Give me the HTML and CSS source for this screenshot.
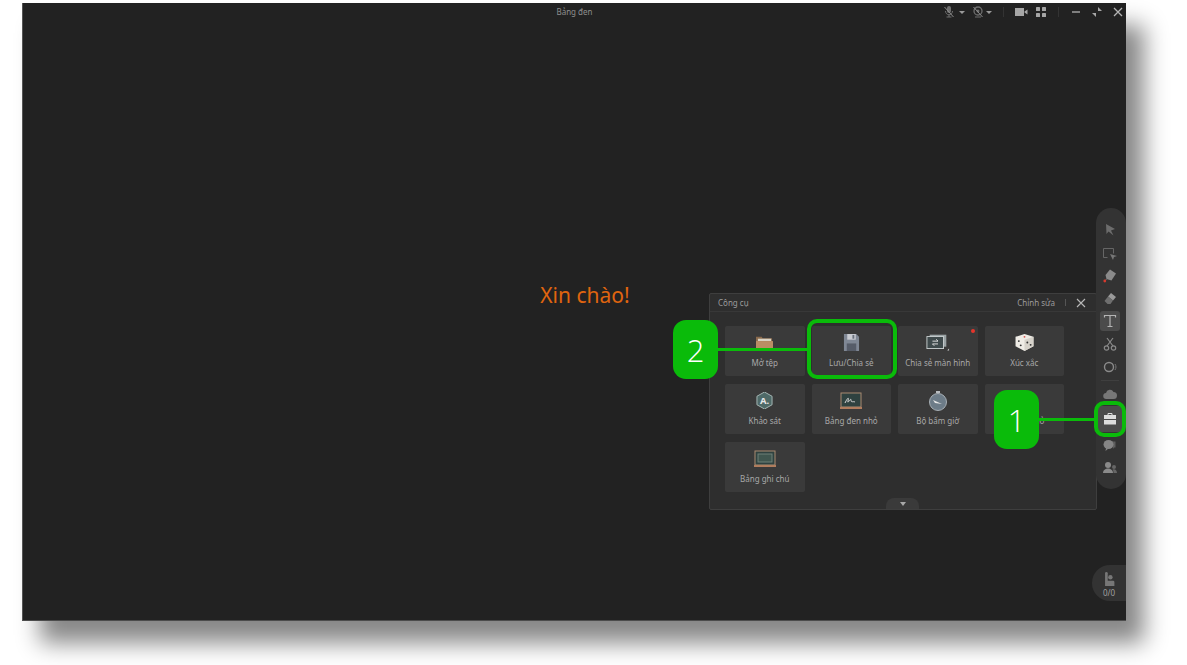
FILE: index.html
```html
<!DOCTYPE html>
<html lang="vi">
<head>
    <meta charset="UTF-8">
    <meta name="viewport" content="width=device-width, initial-scale=1.0">
    <title>Bảng đen</title>
    <link rel="stylesheet" href="styles.css">
</head>
<body>
    <div class="window">
        <header class="titlebar">
            <span></span>
            <span class="title">Bảng đen</span>
            <div class="controls">
                <svg class="ctl mic" viewBox="0 0 12 12"><rect x="4" y="0" width="4" height="7" rx="2" fill="#6f6f6f"/><path d="M2.500 5c0 5 7 5 7 0M6 9v2M3.500 11h5" stroke="#6f6f6f" fill="none"/><path d="M1.500 1l9 10" stroke="#8c8c8c"/></svg>
                <span class="caret"></span>
                <svg class="ctl cam" viewBox="0 0 12 12"><circle cx="6" cy="5" r="4" fill="none" stroke="#6f6f6f" stroke-width="1.300"/><circle cx="6" cy="5" r="1.500" fill="#6f6f6f"/><path d="M3 11h6" stroke="#6f6f6f"/><path d="M1.500 1l9 10" stroke="#8c8c8c"/></svg>
                <span class="caret caret-b"></span>
                <span class="sep"></span>
                <svg class="ctl video" viewBox="0 0 13 10"><rect x="0" y="1" width="9" height="8" fill="#a6a6a6"/><path d="M9.500 4.500l3-2v5l-3-2z" fill="#a6a6a6"/></svg>
                <svg class="ctl grid" viewBox="0 0 10 10"><rect width="4" height="4" rx=".6" fill="#a6a6a6"/><rect x="6" width="4" height="4" rx=".6" fill="#a6a6a6"/><rect y="6" width="4" height="4" rx=".6" fill="#a6a6a6"/><rect x="6" y="6" width="4" height="4" rx=".6" fill="#a6a6a6"/></svg>
                <span class="sep sep-b"></span>
                <svg class="ctl min" viewBox="0 0 10 10"><path d="M1 5h8" stroke="#a6a6a6" stroke-width="1.400"/></svg>
                <svg class="ctl restore" viewBox="0 0 10 10"><path d="M6 0v4h4zM0 6h4v4z" fill="#a6a6a6"/></svg>
                <svg class="ctl close" viewBox="0 0 10 10"><path d="M1 1l8 8M9 1l-8 8" stroke="#b4b4b4" stroke-width="1.300"/></svg>
            </div>
        </header>

        <main class="board">
            <p class="hello">Xin chào!</p>
        </main>

        <section class="panel">
            <div class="panel-head">
                <span>Công cụ</span>
                <div class="panel-actions">
                    <span>Chỉnh sửa</span>
                    <span class="head-sep"></span>
                    <svg class="panel-close" viewBox="0 0 10 10"><path d="M1 1l8 8M9 1l-8 8" stroke="#b8b8b8" stroke-width="1.100"/></svg>
                </div>
            </div>
            <div class="tools">
                <div class="tool">
                    <svg class="tool-icon" viewBox="0 0 20 18"><path d="M1 3h6l1 1.500h10V9H1z" fill="#8a6a4c"/><rect x="3" y="5" width="14" height="2.500" fill="#d8d2c4"/><path d="M1 7.500h18V16H1z" fill="#b98d64"/></svg>
                    <span>Mở tệp</span>
                </div>
                <div class="tool">
                    <svg class="tool-icon" viewBox="0 0 20 18"><path d="M2 0h13l3 3v15H2z" fill="#7f8794"/><rect x="5.500" y="0" width="9" height="6" fill="#c9ccd2"/><rect x="11" y="1" width="2" height="4" fill="#6a717d"/><rect x="5" y="10" width="10" height="8" fill="#565c68"/></svg>
                    <span>Lưu/Chia sẻ</span>
                </div>
                <div class="tool">
                    <i class="dot"></i>
                    <svg class="tool-icon wide" viewBox="0 0 26 18"><rect x="4" y="0" width="18" height="13" fill="#9aa3a5"/><rect x="1" y="2" width="18" height="13" fill="#3f4a4c" stroke="#c9cfd0"/><path d="M7 7h6l-2-2M13 10H7l2 2" stroke="#e4e4e4" fill="none"/><path d="M25 15v2h-2z" fill="#cfcfcf"/></svg>
                    <span>Chia sẻ màn hình</span>
                </div>
                <div class="tool">
                    <svg class="tool-icon" viewBox="0 0 20 18"><path d="M10 0l9.500 3v10L10 18 .5 13V3z" fill="#efece6"/><path d="M10 6l9.500-3v10L10 18z" fill="#d6d2ca"/><circle cx="10" cy="3" r="1" fill="#d9534f"/><circle cx="4" cy="7.500" r="1" fill="#333"/><circle cx="6" cy="12" r="1" fill="#333"/><circle cx="13" cy="9" r="1" fill="#333"/><circle cx="16.500" cy="11.500" r="1" fill="#333"/></svg>
                    <span>Xúc xắc</span>
                </div>
                <div class="tool">
                    <svg class="tool-icon" viewBox="0 0 20 18"><path d="M10 0l8 4.500v9L10 18l-8-4.500v-9z" fill="#4f6a68" stroke="#a9bab8"/><text x="10" y="13" class="glyph">A.</text></svg>
                    <span>Khảo sát</span>
                </div>
                <div class="tool">
                    <svg class="tool-icon wide" viewBox="0 0 24 18"><rect x="2" y="1" width="20" height="14" fill="#2f4240" stroke="#a98a70"/><path d="M6 11c3-6 4-6 3-2s3-4 3-1 2 1 4 2" stroke="#d8d8d8" fill="none"/><rect x="1" y="15" width="22" height="2" fill="#b07d5e"/></svg>
                    <span>Bảng đen nhỏ</span>
                </div>
                <div class="tool">
                    <svg class="tool-icon wide" viewBox="0 0 20 20"><rect x="8" y="0" width="4" height="2" fill="#b8bcc0"/><circle cx="10" cy="11" r="8.500" fill="#6d7c88" stroke="#a7afb5"/><path d="M5 9l9 4-7-1z" fill="#e6e6e6"/></svg>
                    <span>Bộ bấm giờ</span>
                </div>
                <div class="tool">
                    <span>Nhóm nhỏ</span>
                </div>
                <div class="tool">
                    <svg class="tool-icon wide" viewBox="0 0 24 18"><rect x="2" y="1" width="20" height="14" fill="#2f4240" stroke="#a98a70"/><rect x="5" y="4" width="14" height="8" fill="#40564f" stroke="#6f8078"/><rect x="1" y="15" width="22" height="2" fill="#b07d5e"/></svg>
                    <span>Bảng ghi chú</span>
                </div>
            </div>
            <div class="panel-tab"><i></i></div>
        </section>

        <aside class="toolbar">
            <svg class="tb" viewBox="0 0 14 14"><path d="M3 1l9 5-4 1.500 2.500 5-5-4-2 2.500z" fill="#6c6c6c"/></svg>
            <svg class="tb tb-select" viewBox="0 0 14 14"><path d="M.5 1.500h10v5M.5 1.500v9h4" fill="none" stroke="#666"/><path d="M7 7l7 2-3 1-1 3z" fill="#777"/></svg>
            <svg class="tb" viewBox="0 0 14 14"><path d="M7 .5l6 4-4.500 7-5-1.500L2.500 6z" fill="#8a8a8a"/><path d="M3.500 10l-1.500 2" stroke="#777"/><circle cx="1.800" cy="12" r="1.400" fill="#d63a2e"/></svg>
            <svg class="tb" viewBox="0 0 14 14"><path d="M8 1l5 4-3 3.500-5-4z" fill="#9a9a9a"/><path d="M5 4.500l5 4-2.500 3.500H4.500L1.500 9z" fill="#6e6e6e"/></svg>
            <div class="tb-active text-tool"><svg class="tb" viewBox="0 0 14 14"><path d="M1.500 3.500V1.500h11v2M7 1.500v11M4.500 12.500h5" fill="none" stroke="#b4b4b4" stroke-width="1.200"/></svg></div>
            <svg class="tb" viewBox="0 0 14 14"><path d="M4 1l6 8M10 1L4 9" stroke="#8a8a8a" stroke-width="1.200"/><circle cx="3.500" cy="11" r="2.200" fill="none" stroke="#8a8a8a" stroke-width="1.200"/><circle cx="10.500" cy="11" r="2.200" fill="none" stroke="#8a8a8a" stroke-width="1.200"/></svg>
            <svg class="tb" viewBox="0 0 14 14"><circle cx="6" cy="7" r="4.500" fill="none" stroke="#8a8a8a" stroke-width="1.400"/><path d="M12 4c1.300 2 1.300 4 0 6" fill="none" stroke="#777"/></svg>
            <span class="tb-line"></span>
            <svg class="tb" viewBox="0 0 14 14"><path d="M3.500 12a3 3 0 0 1-.5-6 4 4 0 0 1 7.500-1 3.500 3.500 0 0 1 0 7z" fill="#777"/></svg>
            <div class="tb-active box-tool"><svg class="tb" viewBox="0 0 14 14"><path d="M5 3V1.500h4V3" fill="none" stroke="#ddd"/><rect x="1" y="3" width="12" height="4" fill="#ddd"/><rect x="1" y="8" width="12" height="4.500" fill="#ddd"/></svg></div>
            <svg class="tb" viewBox="0 0 14 14"><path d="M9 3.500h3.500v6H11l-1 1.500z" fill="#5e5e5e"/><ellipse cx="5.500" cy="6.500" rx="5" ry="4.500" fill="#858585"/><path d="M3 10l-.5 3 3-2.500z" fill="#858585"/></svg>
            <svg class="tb" viewBox="0 0 14 14"><circle cx="5" cy="4" r="3" fill="#8a8a8a"/><path d="M0 12c0-6 10-6 10 0z" fill="#8a8a8a"/><circle cx="11" cy="6" r="2" fill="#666"/><path d="M10.500 12c0-2-.5-3-1-3.500 2-1 4.500 0 4.500 3.500z" fill="#666"/></svg>
        </aside>

        <div class="seat">
            <svg class="seat-icon" viewBox="0 0 12 18"><rect x="1" y="1" width="3" height="11" rx="1.500" fill="#777"/><circle cx="7" cy="7" r="2.500" fill="#777"/><path d="M1 11h9a1.500 1.500 0 0 1 1.500 1.500V17H1z" fill="#777"/></svg>
            <span>0/0</span>
        </div>

        <div class="mark mark-save"></div>
        <div class="mark mark-box"></div>
        <div class="link link-save"></div>
        <div class="link link-box"></div>
        <div class="badge badge-save">2</div>
        <div class="badge badge-box">1</div>
    </div>
</body>
</html>
```

FILE: styles.css
```css
body {
    margin: 0;
    background-color: #fff;
    font-family: "Noto Sans", "Open Sans", sans-serif;
    height: 665px;
    overflow: hidden;
}

.window {
    position: relative;
    display: flex;
    flex-direction: column;
    box-sizing: border-box;
    width: 1104px;
    height: 618px;
    margin: 3px 0 0 22px;
    background-color: #222;
    border-bottom: 1px solid #4c4c4c;
    border-left: 1px solid #555;
    box-shadow: 18px 22px 22px rgba(0, 0, 0, 0.47);
}

.titlebar {
    display: grid;
    grid-template-columns: 1fr auto 1fr;
    align-items: center;
    height: 18px;
    color: #8e8e8e;
    font-size: 8px;
}

.title {
    line-height: 18px;
}

.controls {
    display: flex;
    align-items: center;
    justify-content: flex-end;
    padding-right: 3px;
}

.ctl {
    display: block;
    width: 10px;
    height: 10px;
}

.mic {
    width: 12px;
    height: 12px;
}

.cam {
    width: 12px;
    height: 12px;
    margin-left: 7px;
}

.caret {
    width: 0;
    height: 0;
    margin-left: 4px;
    border-top: 3px solid #9a9a9a;
    border-left: 3px solid transparent;
    border-right: 3px solid transparent;
}

.caret-b {
    margin-left: 2px;
}

.sep {
    width: 1px;
    height: 10px;
    margin: 0 11px;
    background-color: #333;
}

.video {
    width: 13px;
}

.grid {
    margin-left: 8px;
}

.sep-b {
    margin: 0 12px;
}

.restore {
    margin-left: 11px;
}

.close {
    margin-left: 11px;
}

.board {
    flex: 1;
    display: flex;
    align-items: center;
    justify-content: center;
}

.hello {
    margin: 0 0 52px 21px;
    color: #e0650f;
    font-size: 21px;
    line-height: 28px;
}

.panel {
    position: absolute;
    left: 686px;
    top: 290px;
    box-sizing: border-box;
    width: 388px;
    height: 217px;
    background-color: #2e2e2e;
    border: 1px solid #3e3e3e;
    border-radius: 2px;
    color: #a8a8a8;
    font-size: 8px;
}

.panel-head {
    display: flex;
    align-items: center;
    justify-content: space-between;
    height: 17px;
    padding: 0 10px 0 8px;
    border-bottom: 1px solid #383838;
    color: #9c9c9c;
}

.panel-actions {
    display: flex;
    align-items: center;
}

.head-sep {
    width: 1px;
    height: 7px;
    margin: 0 10px;
    background-color: #555;
}

.panel-close {
    width: 10px;
    height: 10px;
}

.tools {
    display: grid;
    grid-template-columns: repeat(4, 79.500px);
    grid-auto-rows: 50px;
    gap: 8px 7px;
    padding: 14px 0 0 15px;
}

.tool {
    position: relative;
    display: flex;
    flex-direction: column;
    align-items: center;
    justify-content: flex-end;
    padding-bottom: 8px;
    box-sizing: border-box;
    background-color: #3a3a3a;
    border-radius: 2px;
    white-space: nowrap;
}

.tool-icon {
    width: 19px;
    height: 17px;
    margin-bottom: 6px;
}

.tool-icon.wide {
    width: 24px;
    height: 20px;
    margin-bottom: 4px;
}

.glyph {
    fill: #e8e8e8;
    font-size: 10px;
    font-weight: 700;
    text-anchor: middle;
    font-family: "Noto Sans", sans-serif;
}

.dot {
    position: absolute;
    top: 3px;
    right: 3px;
    width: 4px;
    height: 4px;
    border-radius: 50%;
    background-color: #e5352b;
}

.panel-tab {
    position: absolute;
    left: 176px;
    bottom: 0;
    display: flex;
    justify-content: center;
    align-items: center;
    width: 33px;
    height: 11px;
    background-color: #3a3a3a;
    border-radius: 8px 8px 0 0;
}

.panel-tab i {
    width: 0;
    height: 0;
    border-top: 4px solid #a8a8a8;
    border-left: 3px solid transparent;
    border-right: 3px solid transparent;
}

.toolbar {
    position: absolute;
    top: 205px;
    right: 0;
    display: flex;
    flex-direction: column;
    align-items: center;
    box-sizing: border-box;
    width: 30px;
    height: 281px;
    padding: 15px 2px 0 0;
    background-color: #333;
    border-radius: 15px;
}

.tb {
    display: block;
    flex: none;
    width: 14px;
    height: 14px;
    margin-bottom: 9px;
}

.tb-select {
    margin: 1px 0 8px;
}

.tb-active {
    flex: none;
    display: flex;
    align-items: center;
    justify-content: center;
    width: 20px;
    height: 20px;
    margin: -4px 0 6px;
    background-color: #4b4b4b;
    border-radius: 3px;
}

.tb-active .tb {
    margin: 0;
}

.box-tool {
    width: 24px;
    height: 26px;
    margin: -4px 0 6px;
}

.tb-line {
    flex: none;
    width: 18px;
    height: 1px;
    margin: -3px 0 6px;
    background-color: #3f3f3f;
}

.seat {
    position: absolute;
    left: 1069px;
    top: 562px;
    display: flex;
    flex-direction: column;
    align-items: center;
    box-sizing: border-box;
    width: 34px;
    height: 36px;
    padding-top: 6px;
    background-color: #333;
    border-radius: 18px 0 0 18px;
    color: #a0a0a0;
    font-size: 8px;
    line-height: 9px;
}

.seat-icon {
    width: 11px;
    height: 16px;
    margin-bottom: 1px;
}

.mark {
    position: absolute;
    box-sizing: border-box;
    border: 4px solid #0abb0a;
    border-radius: 10px;
}

.mark-save {
    left: 784px;
    top: 316px;
    width: 90px;
    height: 60px;
}

.mark-box {
    left: 1071px;
    top: 398px;
    width: 32px;
    height: 36px;
}

.link {
    position: absolute;
    height: 3px;
    background-color: #0abb0a;
}

.link-save {
    left: 693px;
    top: 345px;
    width: 93px;
}

.link-box {
    left: 1013px;
    top: 415px;
    width: 60px;
}

.badge {
    position: absolute;
    display: flex;
    align-items: center;
    justify-content: center;
    width: 45px;
    height: 59px;
    background-color: #0abb0a;
    border-radius: 13px;
    color: #fff;
    font-family: "Open Sans", sans-serif;
    font-size: 31px;
    font-weight: 300;
}

.badge-save {
    left: 650px;
    top: 317px;
}

.badge-box {
    left: 971px;
    top: 387px;
}
```
